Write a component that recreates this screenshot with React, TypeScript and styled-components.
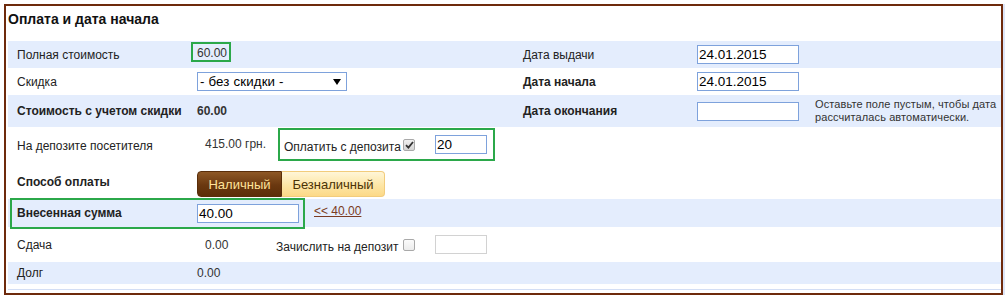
import React from "react";
import styled, { createGlobalStyle, css } from "styled-components";

const Global = createGlobalStyle`
  html, body { margin: 0; padding: 0; background: #fff; }
  body {
    font-family: "Liberation Sans", Arial, sans-serif;
    font-size: 12px;
    color: #222;
  }
`;

const GREEN = "#2ba84a";
const ROW_BG = "#e4edfd";
const INPUT_BORDER = "#7ea2dc";

const Frame = styled.div`
  margin: 4px 0 0 4px;
  width: 993px;
  height: 287px;
  padding-left: 2px;
  border: 2px solid #6e2a0c;
  box-shadow: 2px 0 0 0 #dde5f7;
  display: flex;
  flex-direction: column;
`;

const Title = styled.div`
  height: 35px;
  box-sizing: border-box;
  padding-top: 4px;
  font-size: 14px;
  line-height: 18px;
  font-weight: bold;
  color: #111;
`;

const Row = styled.div<{ $alt?: boolean; $h: number; $annotated?: boolean }>`
  position: relative;
  display: grid;
  grid-template-columns: 180px 326px 174px 118px 1fr;
  align-items: center;
  height: ${(p) => p.$h}px;
  padding-left: 9px;
  background: ${(p) => (p.$alt ? ROW_BG : "#fff")};
  ${(p) =>
    p.$annotated &&
    css`
      z-index: 1;
      &::after {
        content: "";
        position: absolute;
        z-index: 2;
        left: 2px;
        top: -1px;
        width: 291px;
        height: 27px;
        border: 2px solid ${GREEN};
        pointer-events: none;
      }
    `}
`;

const Label = styled.div<{ $bold?: boolean }>`
  font-weight: ${(p) => (p.$bold ? "bold" : "normal")};
  line-height: 14px;
  color: #222;
`;

const Value = styled.div<{ $bold?: boolean; $boxed?: boolean; $pad?: number }>`
  font-weight: ${(p) => (p.$bold ? "bold" : "normal")};
  line-height: 14px;
  color: #333;
  padding-left: ${(p) => p.$pad ?? 0}px;
  ${(p) =>
    p.$boxed &&
    css`
      justify-self: start;
      line-height: 13px;
      margin-left: -6px;
      margin-bottom: 5px;
      padding: 3px 2px 0 4px;
      border: 2px solid ${GREEN};
    `}
`;

const TextInput = styled.div<{ $w: number; $disabled?: boolean }>`
  box-sizing: border-box;
  width: ${(p) => p.$w}px;
  height: 19px;
  border: 1px solid ${(p) => (p.$disabled ? "#d2d2d2" : INPUT_BORDER)};
  background: #fff;
  font-size: 13.5px;
  line-height: 17px;
  padding: 0 1px;
  color: #000;
`;

const Select = styled.div`
  box-sizing: border-box;
  width: 150px;
  height: 19px;
  border: 1px solid ${INPUT_BORDER};
  background: #fff;
  display: flex;
  align-items: center;
  justify-content: space-between;
  padding: 0 5px 0 2px;
  font-size: 13.3px;
  color: #000;
  letter-spacing: 0.15px;
`;

const Hint = styled.div`
  font-size: 11px;
  line-height: 13px;
  color: #333;
  letter-spacing: 0.1px;
`;

const Compound = styled.div`
  display: flex;
  align-items: center;
`;

const ValueCell = styled.div<{ $w: number; $raise?: number }>`
  width: ${(p) => p.$w}px;
  padding-left: 8px;
  box-sizing: border-box;
  line-height: 14px;
  color: #333;
  margin-bottom: ${(p) => p.$raise ?? 0}px;
`;

const DepositGroup = styled.div<{ $boxed?: boolean }>`
  display: flex;
  align-items: center;
  ${(p) =>
    p.$boxed
      ? css`
          height: 29px;
          border: 2px solid ${GREEN};
          padding: 0 6px 0 4px;
          margin-bottom: 3px;
        `
      : css`
          padding: 0;
        `}
`;

const GroupLabel = styled.span<{ $w: number }>`
  width: ${(p) => p.$w}px;
  line-height: 14px;
  margin-top: 4px;
  color: #222;
  white-space: nowrap;
`;

const Check = styled.span<{ $checked?: boolean }>`
  box-sizing: border-box;
  width: 12px;
  height: 12px;
  margin-right: 20px;
  border: 1px solid #a9a9a9;
  border-radius: 2px;
  background: ${(p) =>
    p.$checked ? "linear-gradient(#f0f0f0, #d4d4d4)" : "linear-gradient(#fbfbfb, #ececec)"};
  display: flex;
  align-items: center;
  justify-content: center;
`;

const Toggle = styled.div`
  display: flex;
  margin-top: 4px;
`;

const ToggleButton = styled.div<{ $active?: boolean; $pos: "left" | "right" }>`
  box-sizing: border-box;
  height: 26px;
  display: flex;
  align-items: center;
  font-size: 13px;
  ${(p) =>
    p.$pos === "left"
      ? css`
          border-radius: 4px 0 0 4px;
          width: 85px;
        `
      : css`
          border-radius: 0 4px 4px 0;
          width: 103px;
        `}
  justify-content: center;
  ${(p) =>
    p.$active
      ? css`
          background: linear-gradient(#8e5826, #6a3810 55%, #5c2e08);
          border: 1px solid #5a2e0a;
          color: #ffe39a;
        `
      : css`
          background: linear-gradient(#fff6d8, #fde6a6 55%, #fcd987);
          border: 1px solid #f2cc7c;
          border-left: none;
          color: #4a3206;
        `}
`;

const BackLink = styled.a`
  color: #7b3b22;
  text-decoration: underline;
  line-height: 14px;
  margin-left: 15px;
  margin-bottom: 4px;
  cursor: pointer;
`;

const Footer = styled.div`
  margin-top: 5px;
  height: 1px;
  background: #d3def5;
`;

const CheckMark = () => (
  <svg width="9" height="8" viewBox="0 0 9 8">
    <path d="M1 4.2 L3.4 6.6 L8 1" fill="none" stroke="#333" strokeWidth="1.8" />
  </svg>
);

const Arrow = () => (
  <svg width="8" height="6" viewBox="0 0 8 6">
    <path d="M0 0 H8 L4 6 Z" fill="#000" />
  </svg>
);

export default function App() {
  return (
    <>
      <Global />
      <Frame>
        <Title>Оплата и дата начала</Title>

        <Row $alt $h={27}>
          <Label>Полная стоимость</Label>
          <Value $boxed>60.00</Value>
          <Label>Дата выдачи</Label>
          <TextInput $w={102}>24.01.2015</TextInput>
          <div />
        </Row>

        <Row $h={27}>
          <Label>Скидка</Label>
          <Select>
            <span>- без скидки -</span>
            <Arrow />
          </Select>
          <Label $bold>Дата начала</Label>
          <TextInput $w={102}>24.01.2015</TextInput>
          <div />
        </Row>

        <Row $alt $h={32}>
          <Label $bold>Стоимость с учетом скидки</Label>
          <Value $bold>60.00</Value>
          <Label $bold>Дата окончания</Label>
          <TextInput $w={102} />
          <Hint>
            Оставьте поле пустым, чтобы дата
            <br />
            рассчиталась автоматически.
          </Hint>
        </Row>

        <Row $h={38}>
          <Label>На депозите посетителя</Label>
          <Compound>
            <ValueCell $w={81} $raise={5}>
              415.00 грн.
            </ValueCell>
            <DepositGroup $boxed>
              <GroupLabel $w={119}>Оплатить с депозита</GroupLabel>
              <Check $checked>
                <CheckMark />
              </Check>
              <TextInput $w={52}>20</TextInput>
            </DepositGroup>
          </Compound>
          <div />
          <div />
          <div />
        </Row>

        <Row $h={34}>
          <Label $bold>Способ оплаты</Label>
          <Toggle>
            <ToggleButton $active $pos="left">
              Наличный
            </ToggleButton>
            <ToggleButton $pos="right">Безналичный</ToggleButton>
          </Toggle>
          <div />
          <div />
          <div />
        </Row>

        <Row $alt $h={28} $annotated>
          <Label $bold>Внесенная сумма</Label>
          <Compound>
            <TextInput $w={102}>40.00</TextInput>
            <BackLink>&lt;&lt; 40.00</BackLink>
          </Compound>
          <div />
          <div />
          <div />
        </Row>

        <Row $h={35}>
          <Label>Сдача</Label>
          <Compound>
            <ValueCell $w={79}>0.00</ValueCell>
            <DepositGroup>
              <GroupLabel $w={127}>Зачислить на депозит</GroupLabel>
              <Check />
              <TextInput $w={52} $disabled />
            </DepositGroup>
          </Compound>
          <div />
          <div />
          <div />
        </Row>

        <Row $alt $h={22}>
          <Label>Долг</Label>
          <Value>0.00</Value>
          <div />
          <div />
          <div />
        </Row>

        <Footer />
      </Frame>
    </>
  );
}
